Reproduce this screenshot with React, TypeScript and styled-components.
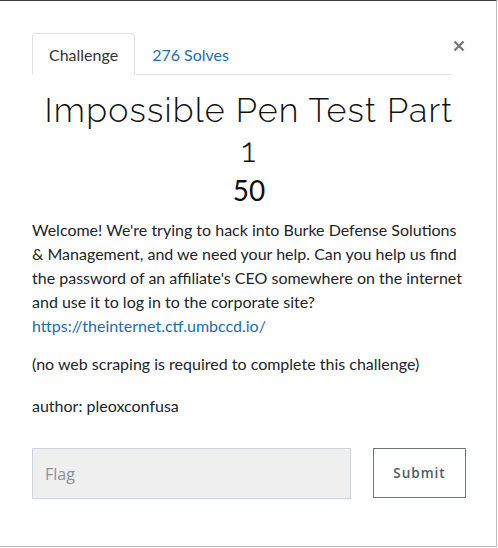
import React from "react";
import styled, { createGlobalStyle } from "styled-components";

const Global = createGlobalStyle`
  html, body { margin: 0; padding: 0; background: #fff; }
  body { font-family: Lato, "Open Sans", sans-serif; color: #212529; }
  * { box-sizing: border-box; }
`;

const Modal = styled.div`
  width: 497px;
  height: 547px;
  background: #fff;
  border-top: 1px solid #3d3d3d;
  border-right: 1px solid #bdbdbd;
  border-bottom: 1px solid #bdbdbd;
  padding: 32px 30px 0 32px;
  display: flex;
  flex-direction: column;
`;

const Header = styled.div`
  display: flex;
  align-items: flex-start;
`;

const Tabs = styled.div`
  flex: 0 0 420px;
  display: flex;
  border-bottom: 1px solid #dee2e6;
  height: 42px;
`;

const Tab = styled.div<{ $active?: boolean }>`
  height: 42px;
  padding: 0 16px;
  display: flex;
  align-items: center;
  font-size: 16px;
  color: ${(p) => (p.$active ? "#333" : "#1f6bb0")};
  border: 1px solid ${(p) => (p.$active ? "#dee2e6" : "transparent")};
  border-bottom-color: ${(p) => (p.$active ? "#fff" : "transparent")};
  border-radius: 4px 4px 0 0;
  background: ${(p) => (p.$active ? "#fff" : "transparent")};
  margin-bottom: -1px;
`;

const Close = styled.div`
  flex: 0 0 12px;
  display: flex;
  justify-content: center;
  padding-top: 7px;
  margin-left: 1px;
`;

const Title = styled.h1`
  margin: 15px 0 0 0;
  font-family: Raleway, Lato, sans-serif;
  font-weight: 300;
  font-size: 34px;
  line-height: 40px;
  letter-spacing: 1.2px;
  text-align: center;
  color: #111;
  padding: 0 10px;
`;

const Points = styled.div`
  font-size: 28px;
  font-weight: 400;
  line-height: 40px;
  text-align: center;
  color: #111;
`;

const Desc = styled.div`
  font-size: 16px;
  line-height: 24px;
  color: #212529;
  margin-top: 8px;
  a { color: #1f6bb0; text-decoration: none; }
`;

const Para = styled.p<{ $gap: number }>`
  margin: 0 0 ${(p) => p.$gap}px 0;
`;

const FormRow = styled.div`
  display: flex;
  gap: 22px;
  margin-top: 12px;
`;

const Input = styled.input`
  flex: 0 0 319px;
  height: 51px;
  background: #efefef;
  border: 1px solid #cfd4da;
  padding: 0 12px;
  font-family: "Open Sans", Lato, sans-serif;
  font-size: 16px;
  color: #333;
  outline: none;
  &::placeholder { color: #8a8f94; }
`;

const Button = styled.button`
  flex: 0 0 93px;
  height: 50px;
  background: #fff;
  border: 1px solid #6c757d;
  font-family: "Open Sans", Lato, sans-serif;
  font-weight: 600;
  font-size: 13.5px;
  letter-spacing: 1px;
  color: #535b62;
  cursor: pointer;
`;

export default function App() {
  return (
    <>
      <Global />
      <Modal>
        <Header>
          <Tabs>
            <Tab $active>Challenge</Tab>
            <Tab>276 Solves</Tab>
          </Tabs>
          <Close>
            <svg width="12" height="12" viewBox="0 0 12 12">
              <path d="M1.5 1.5 L10.5 10.5 M10.5 1.5 L1.5 10.5" stroke="#777" strokeWidth="2.4" strokeLinecap="butt" />
            </svg>
          </Close>
        </Header>
        <Title>Impossible Pen Test Part 1</Title>
        <Points>50</Points>
        <Desc>
          <Para $gap={14}>
            Welcome! We're trying to hack into Burke Defense Solutions &amp; Management, and we need your help. Can you help us find the password of an affiliate's CEO somewhere on the internet and use it to log in to the corporate site?
            <br />
            <a href="#">https://theinternet.ctf.umbccd.io/</a>
          </Para>
          <Para $gap={18}>(no web scraping is required to complete this challenge)</Para>
          <Para $gap={18}>author: pleoxconfusa</Para>
        </Desc>
        <FormRow>
          <Input placeholder="Flag" />
          <Button>Submit</Button>
        </FormRow>
      </Modal>
    </>
  );
}
